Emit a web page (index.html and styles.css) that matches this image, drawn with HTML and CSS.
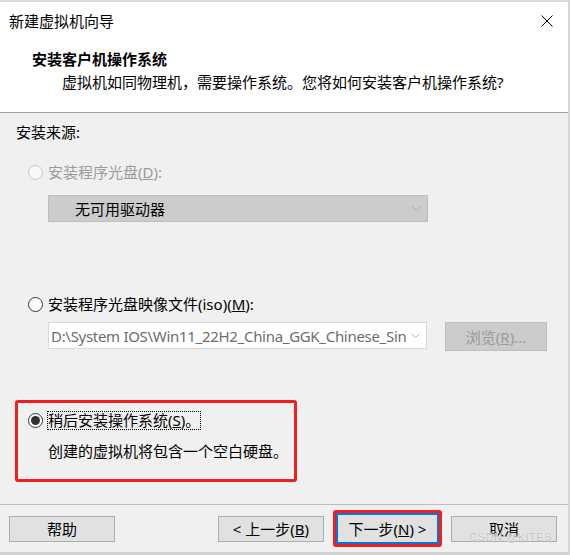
FILE: index.html
```html
<!DOCTYPE html>
<html lang="zh-CN">
<head>
    <meta charset="UTF-8">
    <meta name="viewport" content="width=device-width, initial-scale=1.0">
    <title>新建虚拟机向导</title>
    <link rel="stylesheet" href="styles.css">
</head>
<body>
    <div class="dialog">
        <div class="titlebar">
            <span class="title">新建虚拟机向导</span>
            <svg class="close" width="12" height="12" viewBox="0 0 12 12">
                <path d="M0.5 0.5 L11.5 11.5 M11.5 0.5 L0.5 11.5" stroke="#000" stroke-width="1" fill="none"/>
            </svg>
        </div>

        <div class="header">
            <div class="header-title">安装客户机操作系统</div>
            <div class="header-sub">虚拟机如同物理机，需要操作系统。您将如何安装客户机操作系统?</div>
        </div>

        <div class="content">
            <div class="group-label">安装来源:</div>

            <div class="option disabled">
                <span class="radio"></span>
                <span>安装程序光盘(<u>D</u>):</span>
            </div>
            <div class="select select-disabled">
                <span class="select-value">无可用驱动器</span>
                <svg class="chevron" width="9" height="5" viewBox="0 0 9 5">
                    <polyline points="0.5,0.5 4.5,4.5 8.5,0.5" stroke="#a6a6a6" fill="none"/>
                </svg>
            </div>

            <div class="option option-iso">
                <span class="radio"></span>
                <span>安装程序光盘映像文件(iso)(<u>M</u>):</span>
            </div>
            <div class="iso-row">
                <div class="select select-iso">
                    <span class="select-value">D:\System IOS\Win11_22H2_China_GGK_Chinese_Sin</span>
                    <svg class="chevron" width="9" height="5" viewBox="0 0 9 5">
                        <polyline points="0.5,0.5 4.5,4.5 8.5,0.5" stroke="#b4b4b4" fill="none"/>
                    </svg>
                </div>
                <button class="btn btn-browse" disabled>浏览(<u>R</u>)...</button>
            </div>

            <div class="later-box">
                <div class="option option-later">
                    <span class="radio checked"></span>
                    <span class="focus">稍后安装操作系统(<u>S</u>)。</span>
                </div>
                <div class="later-desc">创建的虚拟机将包含一个空白硬盘。</div>
            </div>
        </div>

        <div class="footer">
            <button class="btn">帮助</button>
            <div class="nav">
                <button class="btn">&lt; 上一步(<u>B</u>)</button>
                <span class="highlight">
                    <button class="btn btn-primary">下一步(<u>N</u>) &gt;</button>
                </span>
                <button class="btn">取消</button>
            </div>
        </div>

        <div class="watermark">CSDN @KITES</div>
    </div>
</body>
</html>
```

FILE: styles.css
```css
body {
    margin: 0;
    font-family: "Noto Sans", "Noto Sans CJK SC", sans-serif;
    font-size: 15px;
    color: #000;
    background: #f0f0f0;
}
.dialog {
    position: relative;
    width: 570px;
    height: 555px;
    box-sizing: border-box;
    display: flex;
    flex-direction: column;
    background: #f0f0f0;
    border-top: 2px solid #d9d9d9;
    border-right: 2px solid #d6d6d6;
    border-bottom: 3px solid #d2d2d2;
}
.titlebar {
    height: 38px;
    display: flex;
    align-items: center;
    justify-content: space-between;
    padding: 0 15px 0 9px;
    background: #fff;
    line-height: 20px;
}
.header {
    background: #fff;
    padding: 9px 0 20px;
    border-bottom: 1px solid #a0a0a0;
    line-height: 20px;
}
.header-title {
    padding-left: 32px;
    font-weight: bold;
}
.header-sub {
    margin-top: 3px;
    padding-left: 62px;
}
.content {
    flex: 1;
    padding-top: 9px;
    line-height: 20px;
}
.group-label {
    margin-left: 16px;
}
.option {
    display: flex;
    align-items: center;
    gap: 5px;
    height: 20px;
    margin: 20px 0 0 28px;
}
.option.disabled {
    color: #9b9b9b;
}
.option-iso {
    margin-top: 72px;
}
.radio {
    width: 15px;
    height: 15px;
    box-sizing: border-box;
    border: 1px solid #333;
    border-radius: 50%;
    background: #fff;
    display: flex;
    align-items: center;
    justify-content: center;
}
.disabled .radio {
    border-color: #c6c6c6;
    background: #f7f7f7;
}
.radio.checked::after {
    content: "";
    width: 9px;
    height: 9px;
    border-radius: 50%;
    background: #333;
}
.select {
    display: flex;
    align-items: center;
    height: 27px;
    box-sizing: border-box;
    border: 1px solid #bfbfbf;
}
.select-disabled {
    width: 380px;
    margin: 13px 0 0 48px;
    background: #cccccc;
}
.select-disabled .select-value {
    padding-left: 26px;
}
.select-value {
    white-space: nowrap;
    overflow: hidden;
}
.chevron {
    margin-left: auto;
    margin-right: 6px;
    flex-shrink: 0;
}
.iso-row {
    display: flex;
    align-items: flex-start;
    gap: 18px;
    margin: 8px 0 0 48px;
}
.select-iso {
    width: 379px;
    background: #fff;
    border-color: #d9d9d9;
    color: #6d6d6d;
}
.select-iso .select-value {
    padding-left: 2px;
    letter-spacing: -0.3px;
}
.btn {
    width: 106px;
    height: 26px;
    padding: 0;
    box-sizing: border-box;
    border: 1px solid #adadad;
    background: #e1e1e1;
    font-family: inherit;
    font-size: 15px;
    color: #000;
}
.btn-browse {
    width: 102px;
    height: 29px;
    background: #cccccc;
    border-color: #bfbfbf;
    color: #9a9a9a;
}
.later-box {
    width: 282px;
    height: 82px;
    box-sizing: border-box;
    margin: 49px 0 0 15px;
    padding: 8px 0 0 10px;
    border: 3px solid #f01e1e;
    border-radius: 3px;
}
.option-later {
    margin: 0;
    height: 19px;
    gap: 4px;
}
.focus {
    border: 1px dotted #000;
    line-height: 17px;
}
.later-desc {
    margin: 11px 0 0 20px;
}
.footer {
    height: 47px;
    display: flex;
    align-items: center;
    justify-content: space-between;
    padding: 0 11px 0 9px;
    border-top: 1px solid #bdbdbd;
}
.nav {
    display: flex;
    align-items: center;
    gap: 9px;
}
.highlight {
    display: flex;
    border: 3px solid #f01e1e;
    border-radius: 3px;
}
.btn-primary {
    width: 103px;
    height: 31px;
    border: 2px solid #0078d7;
}
.watermark {
    position: absolute;
    right: 16px;
    bottom: 9px;
    font-family: "Liberation Sans", sans-serif;
    font-size: 11px;
    letter-spacing: 0.5px;
    color: #bdbdbd;
    text-shadow: 0 0 1px #fff, 0 0 1px #fff;
}
```
